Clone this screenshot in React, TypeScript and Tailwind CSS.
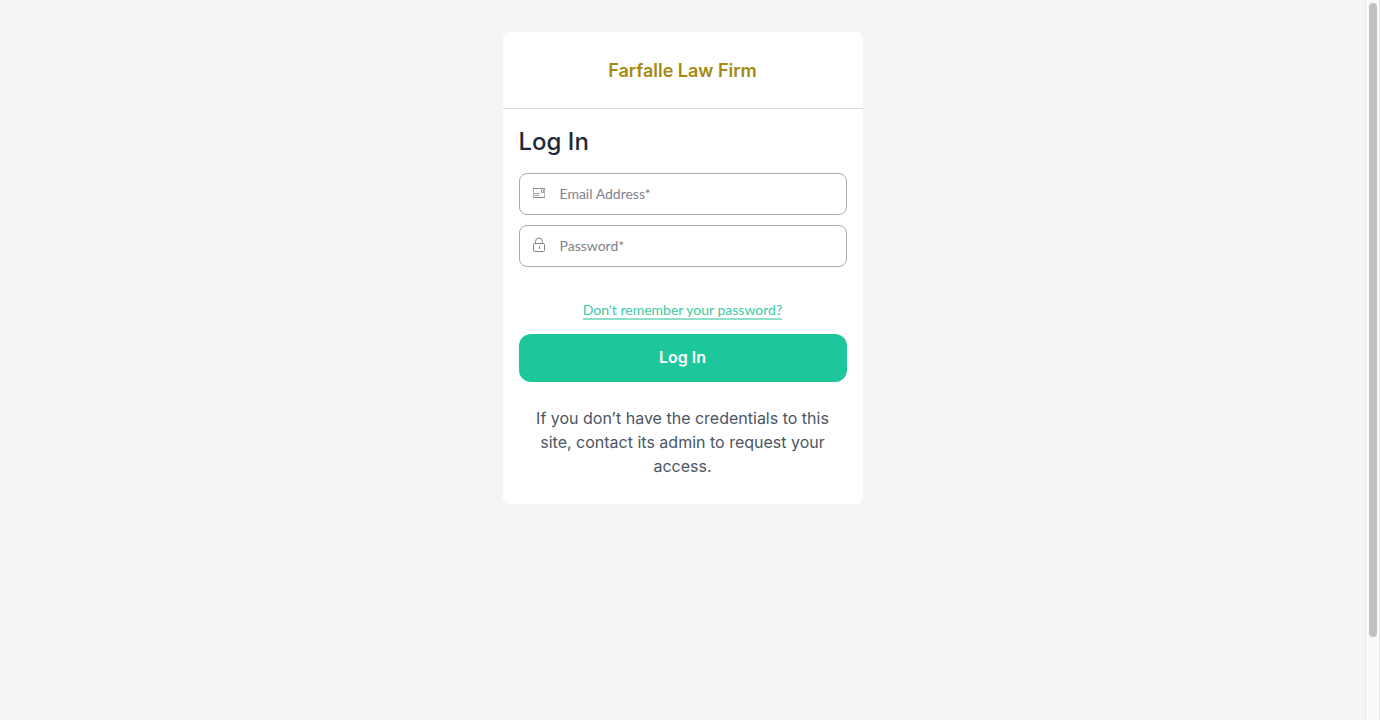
import type { ReactNode } from 'react';

function EmailIcon() {
  return (
    <svg viewBox="0 0 14 14" className="size-3.5" fill="none" stroke="#8a8a8a" strokeWidth="1" aria-hidden="true">
      <path d="M1 2.5H13M1 11.5H13" />
      <path d="M1.5 3V11M12.5 3V11" stroke="#b4b4b4" />
      <path d="M2 7.5H8M2 9.5H7" stroke="#a3a3a3" />
      <path d="M9.5 4V6.5H11.5V4Z" stroke="#999999" />
    </svg>
  );
}

function LockIcon() {
  return (
    <svg viewBox="0 0 14 16" className="h-4 w-3.5" fill="none" stroke="#858585" strokeWidth="1" aria-hidden="true">
      <rect x="1.5" y="6.5" width="11" height="8" rx="1" />
      <path d="M3.5 6.5V4.5A3.5 3.5 0 0 1 10.5 4.5V6.5" />
      <path d="M7.5 9V12" />
    </svg>
  );
}

type FieldProps = { id: string; type: string; label: string; icon: ReactNode };

function Field({ id, type, label, icon }: FieldProps) {
  return (
    <div className="flex h-[42px] items-center rounded-lg border border-[#a9a9b3] bg-white pl-3">
      <label htmlFor={id} aria-label={label} className="flex w-7 shrink-0 items-center pb-0.5">
        {icon}
      </label>
      <input
        id={id}
        type={type}
        placeholder={label}
        className="h-full min-w-0 flex-1 rounded-lg bg-transparent pb-0.5 font-['Lato',sans-serif] text-[14px] text-[#6b7280] outline-none placeholder:text-[#7f828c]"
      />
    </div>
  );
}

export default function App() {
  return (
    <div className="flex min-h-screen bg-[#f4f4f4] font-['Inter',sans-serif]">
      <main className="flex flex-1 items-start justify-center pt-8">
        <section className="w-full max-w-[360px] rounded-md bg-white">
          <header className="border-b border-[#dcdcdf] px-4 pt-[25px] pb-[23px] text-center">
            <h1 className="text-lg leading-7 font-semibold text-[#a48a10]">Farfalle Law Firm</h1>
          </header>
          <form className="px-4 pt-[17px] pb-[26px]" onSubmit={(event) => event.preventDefault()}>
            <h2 className="text-2xl leading-8 font-medium text-[#1f2937]">Log In</h2>
            <div className="mt-[15px] flex flex-col gap-2.5">
              <Field id="email" type="email" label="Email Address*" icon={<EmailIcon />} />
              <Field id="password" type="password" label="Password*" icon={<LockIcon />} />
            </div>
            <div className="mt-[35px] flex justify-center">
              <a
                href="#reset"
                className="border-b-2 border-[#8fe0cb] font-['Lato',sans-serif] text-[14px] leading-4 text-[#3acba5]"
              >
                Don't remember your password?
              </a>
            </div>
            <button
              type="submit"
              className="mt-3.5 h-12 w-full rounded-xl bg-[#1ec69b] pb-0.5 text-base font-semibold text-white"
            >
              Log In
            </button>
            <p className="mt-6 px-4 text-center text-base leading-6 text-[#4b5563]">
              If you don’t have the credentials to this site, contact its admin to request your access.
            </p>
          </form>
        </section>
      </main>
      <div className="flex h-screen w-[15px] shrink-0 flex-col items-center border-x border-[#e7e7e7] bg-[#fafafa] pt-[3px]" aria-hidden="true">
        <div className="h-[88.4%] w-2 rounded-full bg-[#c1c1c1]" />
      </div>
    </div>
  );
}
